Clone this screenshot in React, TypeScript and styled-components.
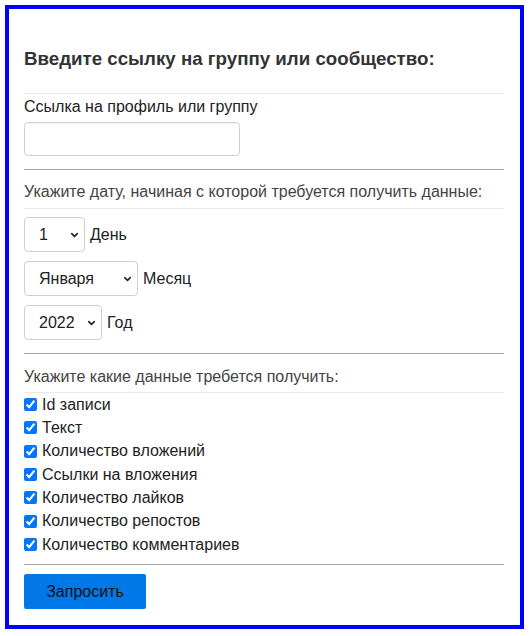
import React, { useState } from "react";
import styled, { createGlobalStyle } from "styled-components";
import { ChevronDown } from "lucide-react";

const GlobalStyle = createGlobalStyle`
  html, body {
    margin: 0;
    padding: 0;
    background: #fff;
  }
  body {
    font-family: "Liberation Sans", Arial, sans-serif;
    color: #222;
  }
`;

const Page = styled.div`
  padding: 5px;
`;

const Frame = styled.form`
  border: 4px solid #0000ff;
  padding: 40px 16px 16px 15px;
  box-sizing: content-box;
  width: 480px;
`;

const Title = styled.h3`
  margin: 0 0 24px;
  font-size: 18.72px;
  line-height: 20px;
  font-weight: bold;
  color: #333;
`;

const Rule = styled.div<{ $dark?: boolean; $top?: number; $bottom?: number }>`
  height: 1px;
  background: ${(p) => (p.$dark ? "#a3a3a3" : "#e8e8e8")};
  margin-top: ${(p) => p.$top ?? 0}px;
  margin-bottom: ${(p) => p.$bottom ?? 0}px;
`;

const FieldLabel = styled.label`
  display: block;
  margin-top: 4px;
  font-size: 16px;
  line-height: 18px;
  color: #222;
`;

const TextInput = styled.input`
  display: block;
  margin-top: 6px;
  width: 216px;
  height: 34px;
  box-sizing: border-box;
  border: 1px solid #cfcfcf;
  border-radius: 4px;
  padding: 6px 10px;
  font: 16px "Liberation Sans", Arial, sans-serif;
  box-shadow: inset 0 1px 1px rgba(0, 0, 0, 0.04);
  outline: none;
`;

const Hint = styled.div<{ $top: number }>`
  margin-top: ${(p) => p.$top}px;
  font-size: 16px;
  line-height: 18px;
  color: #444;
`;

const DateRows = styled.div`
  display: flex;
  flex-direction: column;
  align-items: flex-start;
  gap: 9px;
  margin-top: 8px;
`;

const DateRow = styled.div`
  display: flex;
  align-items: center;
  gap: 5px;
  font-size: 16px;
  color: #222;
`;

const SelectWrap = styled.div<{ $w: number }>`
  position: relative;
  width: ${(p) => p.$w}px;
  height: 35px;
`;

const Select = styled.select`
  appearance: none;
  width: 100%;
  height: 100%;
  box-sizing: border-box;
  border: 1px solid #cfcfcf;
  border-radius: 4px;
  background: #fff;
  padding: 0 20px 0 14px;
  font: 16px "Liberation Sans", Arial, sans-serif;
  color: #222;
  outline: none;
`;

const Arrow = styled.span`
  position: absolute;
  right: 5px;
  top: 50%;
  transform: translateY(-50%);
  display: flex;
  pointer-events: none;
  color: #222;
`;

const Checks = styled.div`
  display: flex;
  flex-direction: column;
`;

const CheckRow = styled.label`
  display: flex;
  align-items: center;
  gap: 5px;
  height: 23.33px;
  font-size: 16px;
  color: #222;
  input {
    margin: 0;
    width: 13px;
    height: 13px;
    accent-color: #0075ff;
  }
`;

const Submit = styled.button`
  display: block;
  margin-top: 9px;
  width: 122px;
  height: 35px;
  border: none;
  border-radius: 2px;
  background: #0078e7;
  color: #111;
  font: 16px "Liberation Sans", Arial, sans-serif;
  cursor: pointer;
`;

const days = Array.from({ length: 31 }, (_, i) => String(i + 1));
const months = [
  "Января",
  "Февраля",
  "Марта",
  "Апреля",
  "Мая",
  "Июня",
  "Июля",
  "Августа",
  "Сентября",
  "Октября",
  "Ноября",
  "Декабря",
];
const years = ["2018", "2019", "2020", "2021", "2022"];

const fields = [
  "Id записи",
  "Текст",
  "Количество вложений",
  "Ссылки на вложения",
  "Количество лайков",
  "Количество репостов",
  "Количество комментариев",
];

const Dropdown = ({
  width,
  value,
  options,
  onChange,
}: {
  width: number;
  value: string;
  options: string[];
  onChange: (v: string) => void;
}) => (
  <SelectWrap $w={width}>
    <Select value={value} onChange={(e) => onChange(e.target.value)}>
      {options.map((o) => (
        <option key={o} value={o}>
          {o}
        </option>
      ))}
    </Select>
    <Arrow>
      <ChevronDown size={11} strokeWidth={3.5} />
    </Arrow>
  </SelectWrap>
);

export default function App() {
  const [day, setDay] = useState("1");
  const [month, setMonth] = useState("Января");
  const [year, setYear] = useState("2022");
  const [checked, setChecked] = useState<boolean[]>(fields.map(() => true));

  return (
    <Page>
      <GlobalStyle />
      <Frame onSubmit={(e) => e.preventDefault()}>
        <Title>Введите ссылку на группу или сообщество:</Title>
        <Rule />
        <FieldLabel htmlFor="link">Ссылка на профиль или группу</FieldLabel>
        <TextInput id="link" type="text" />
        <Rule $dark $top={13} />
        <Hint $top={13}>Укажите дату, начиная с которой требуется получить данные:</Hint>
        <Rule $top={7} />
        <DateRows>
          <DateRow>
            <Dropdown width={61} value={day} options={days} onChange={setDay} />
            День
          </DateRow>
          <DateRow>
            <Dropdown width={114} value={month} options={months} onChange={setMonth} />
            Месяц
          </DateRow>
          <DateRow>
            <Dropdown width={78} value={year} options={years} onChange={setYear} />
            Год
          </DateRow>
        </DateRows>
        <Rule $dark $top={13} />
        <Hint $top={14}>Укажите какие данные требется получить:</Hint>
        <Rule $top={6} />
        <Checks>
          {fields.map((f, i) => (
            <CheckRow key={f}>
              <input
                type="checkbox"
                checked={checked[i]}
                onChange={() =>
                  setChecked((c) => c.map((v, j) => (j === i ? !v : v)))
                }
              />
              {f}
            </CheckRow>
          ))}
        </Checks>
        <Rule $dark $top={8} />
        <Submit type="submit">Запросить</Submit>
      </Frame>
    </Page>
  );
}
